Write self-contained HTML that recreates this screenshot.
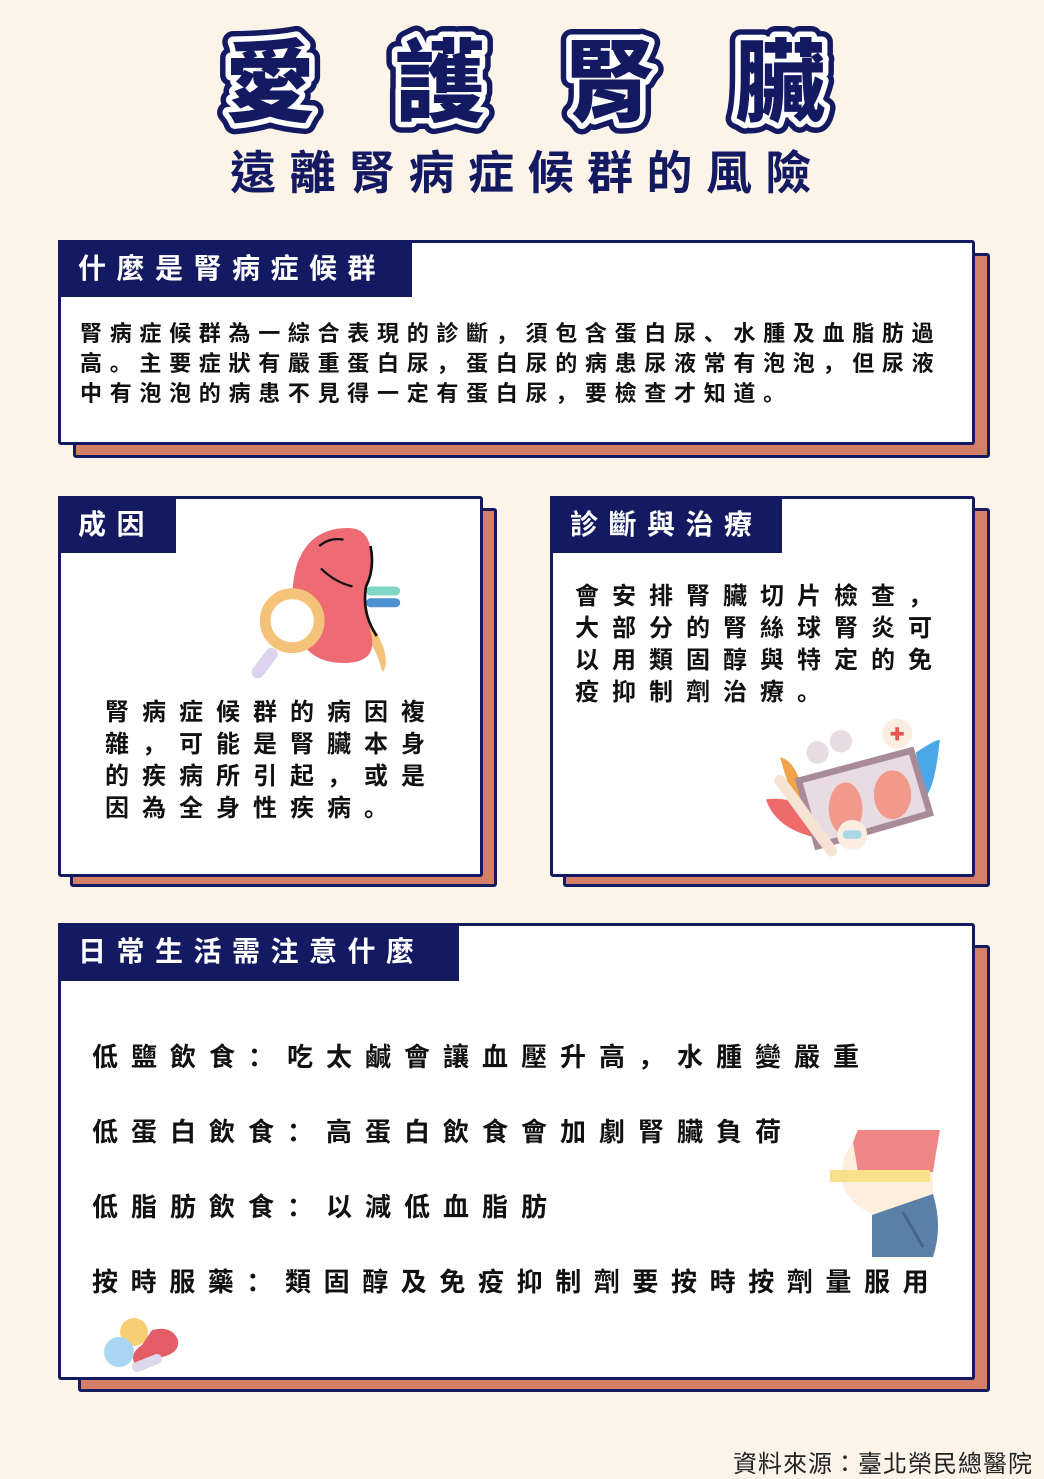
<!DOCTYPE html>
<html><head><meta charset="utf-8"><style>
*{margin:0;padding:0;box-sizing:border-box}
body{width:1044px;height:1478px;background:#fcf4e9;position:relative;overflow:hidden;font-family:"Liberation Sans","Noto Sans CJK SC",sans-serif}
.abs{position:absolute}
.sh{position:absolute;background:#d47f66;border:3px solid #141a62;border-radius:3px}
.card{position:absolute;background:#fff;border:3px solid #141a62;border-radius:3px}
.tab{position:absolute;background:#141a62;color:#fff;font-weight:bold;font-size:28px;letter-spacing:10.5px;padding-left:20px;line-height:57px;white-space:nowrap}
.t{position:absolute;font-weight:bold;color:#111;white-space:nowrap}
</style></head><body>
<svg class="abs" style="left:0;top:0" width="1044" height="140">
<g font-family="Liberation Sans, Noto Sans CJK TC, sans-serif" font-weight="900" font-size="90" stroke-linejoin="round">
<g stroke="#141a62" stroke-width="22" fill="#141a62"><text x="225" y="114">愛</text><text x="395" y="114">護</text><text x="565" y="114">腎</text><text x="735" y="114">臟</text></g>
<g stroke="#fff" stroke-width="11" fill="#fff"><text x="225" y="114">愛</text><text x="395" y="114">護</text><text x="565" y="114">腎</text><text x="735" y="114">臟</text></g>
<g fill="#141a62"><text x="225" y="114">愛</text><text x="395" y="114">護</text><text x="565" y="114">腎</text><text x="735" y="114">臟</text></g>
</g></svg>
<div class="t" style="left:230px;top:144px;font-size:46px;letter-spacing:13.5px;color:#141a62;line-height:58px;font-family:'Liberation Sans','Noto Sans CJK TC',sans-serif">遠離腎病症候群的風險</div>

<div class="sh" style="left:73px;top:253px;width:917px;height:205px"></div>
<div class="card" style="left:58px;top:240px;width:917px;height:205px"></div>
<div class="tab" style="left:58px;top:240px;width:354px">什麼是腎病症候群</div>
<div class="t" style="left:80px;top:319px;font-size:22px;letter-spacing:7.7px;line-height:30px">腎病症候群為一綜合表現的診斷，須包含蛋白尿、水腫及血脂肪過<br>高。主要症狀有嚴重蛋白尿，蛋白尿的病患尿液常有泡泡，但尿液<br>中有泡泡的病患不見得一定有蛋白尿，要檢查才知道。</div>

<div class="sh" style="left:70px;top:508px;width:427px;height:379px"></div>
<div class="card" style="left:58px;top:496px;width:425px;height:381px"></div>
<div class="tab" style="left:58px;top:496px;width:118px">成因</div>
<svg class="abs" style="left:240px;top:510px" width="180" height="180" viewBox="0 0 200 190">
<path d="M130 110 Q150 120 160 150 Q165 170 158 175 Q150 140 130 130Z" fill="#f5c27a"/>
<rect x="140" y="80" width="38" height="10" rx="5" fill="#7fd6c2"/><rect x="140" y="93" width="38" height="10" rx="5" fill="#4f90d0"/>
<path d="M120 15 Q150 15 145 60 Q135 90 145 130 Q155 165 115 165 Q70 165 60 120 Q55 90 62 60 Q75 15 120 15Z" fill="#ee6b74"/>
<path d="M145 35 Q150 60 140 80 Q135 110 152 135" stroke="#111" stroke-width="3" fill="none"/>
<path d="M88 35 Q100 25 115 28" stroke="#111" stroke-width="2.5" fill="none"/>
<path d="M90 60 Q105 75 125 80" stroke="#111" stroke-width="2.5" fill="none"/>
<path d="M35 155 L20 175" stroke="#ddd3f0" stroke-width="14" stroke-linecap="round"/>
<circle cx="58" cy="118" r="30" fill="#fff" stroke="#f5c27a" stroke-width="12"/>
</svg>
<div class="t" style="left:105px;top:697px;font-size:24px;letter-spacing:13px;line-height:32px">腎病症候群的病因複<br>雜，可能是腎臟本身<br>的疾病所引起，或是<br>因為全身性疾病。</div>

<div class="sh" style="left:563px;top:508px;width:427px;height:379px"></div>
<div class="card" style="left:550px;top:496px;width:425px;height:381px"></div>
<div class="tab" style="left:550px;top:496px;width:232px">診斷與治療</div>
<div class="t" style="left:575px;top:581px;font-size:24px;letter-spacing:13px;line-height:32px">會安排腎臟切片檢查，<br>大部分的腎絲球腎炎可<br>以用類固醇與特定的免<br>疫抑制劑治療。</div>
<svg class="abs" style="left:755px;top:715px" width="200" height="150" viewBox="0 0 210 160">
<path d="M170 40 Q200 20 195 30 Q190 80 178 90Z" fill="#4aa8e8"/>
<path d="M25 45 Q45 50 50 90 L40 95Z" fill="#f2a34a"/>
<path d="M10 90 Q50 85 70 120 L60 130 Q20 120 10 90Z" fill="#ee6b6b"/>
<path d="M45 70 L165 38 L185 105 L65 140Z" fill="#e8dce2" stroke="#a88a99" stroke-width="7"/>
<ellipse cx="95" cy="100" rx="18" ry="28" fill="#f1998b"/><ellipse cx="145" cy="85" rx="20" ry="26" fill="#f1998b"/>
<path d="M25 70 L80 145" stroke="#f5e4d3" stroke-width="12" stroke-linecap="round"/>
<circle cx="65" cy="40" r="12" fill="#e8dce2"/><circle cx="90" cy="28" r="12" fill="#e8dce2"/>
<circle cx="150" cy="20" r="16" fill="#fbeee0"/><path d="M143 20 h14 M150 13 v14" stroke="#e85454" stroke-width="4"/>
<circle cx="102" cy="128" r="16" fill="#fbeee0"/><rect x="92" y="123" width="20" height="9" rx="4" fill="#a8d8e8"/>
</svg>

<div class="sh" style="left:78px;top:945px;width:912px;height:447px"></div>
<div class="card" style="left:58px;top:923px;width:917px;height:457px"></div>
<div class="tab" style="left:58px;top:923px;width:401px;height:58px">日常生活需注意什麼</div>
<div class="t" style="left:92px;top:1020px;font-size:26px;letter-spacing:13px;line-height:75px">低鹽飲食：吃太鹹會讓血壓升高，水腫變嚴重<br>低蛋白飲食：高蛋白飲食會加劇腎臟負荷<br>低脂肪飲食：以減低血脂肪<br><span style="letter-spacing:12.6px">按時服藥：類固醇及免疫抑制劑要按時按劑量服用</span></div>
<svg class="abs" style="left:828px;top:1122px" width="112" height="136" viewBox="0 0 112 136">
<path d="M30 8 H112 Q108 30 105 50 L30 50 Q15 40 30 8Z" fill="#ef8585"/>
<path d="M25 20 Q10 40 15 65 Q25 85 50 95 L105 75 L105 50 L30 50Z" fill="#fcefdd"/>
<rect x="2" y="48" width="100" height="12" fill="#f9e08a"/>
<path d="M44 93 L105 72 Q115 105 105 135 H44Z" fill="#5a80a8"/>
<path d="M75 90 L95 125" stroke="#44668c" stroke-width="3"/>
</svg>
<svg class="abs" style="left:102px;top:1315px" width="80" height="58" viewBox="0 0 80 58">
<circle cx="32" cy="17" r="14" fill="#f7cf72"/>
<path d="M50 15 Q70 10 76 25 Q78 38 60 42 L35 52 Q25 40 40 30Z" fill="#e35d67"/>
<path d="M35 52 L55 44" stroke="#ddd8ee" stroke-width="10" stroke-linecap="round"/>
<circle cx="17" cy="37" r="15" fill="#a9d6f2"/>
</svg>

<div class="abs" style="left:733px;top:1444px;font-size:24px;color:#222;white-space:nowrap;letter-spacing:1px;font-family:'Liberation Sans','Noto Sans CJK TC',sans-serif">資料來源：臺北榮民總醫院</div>
</body></html>
